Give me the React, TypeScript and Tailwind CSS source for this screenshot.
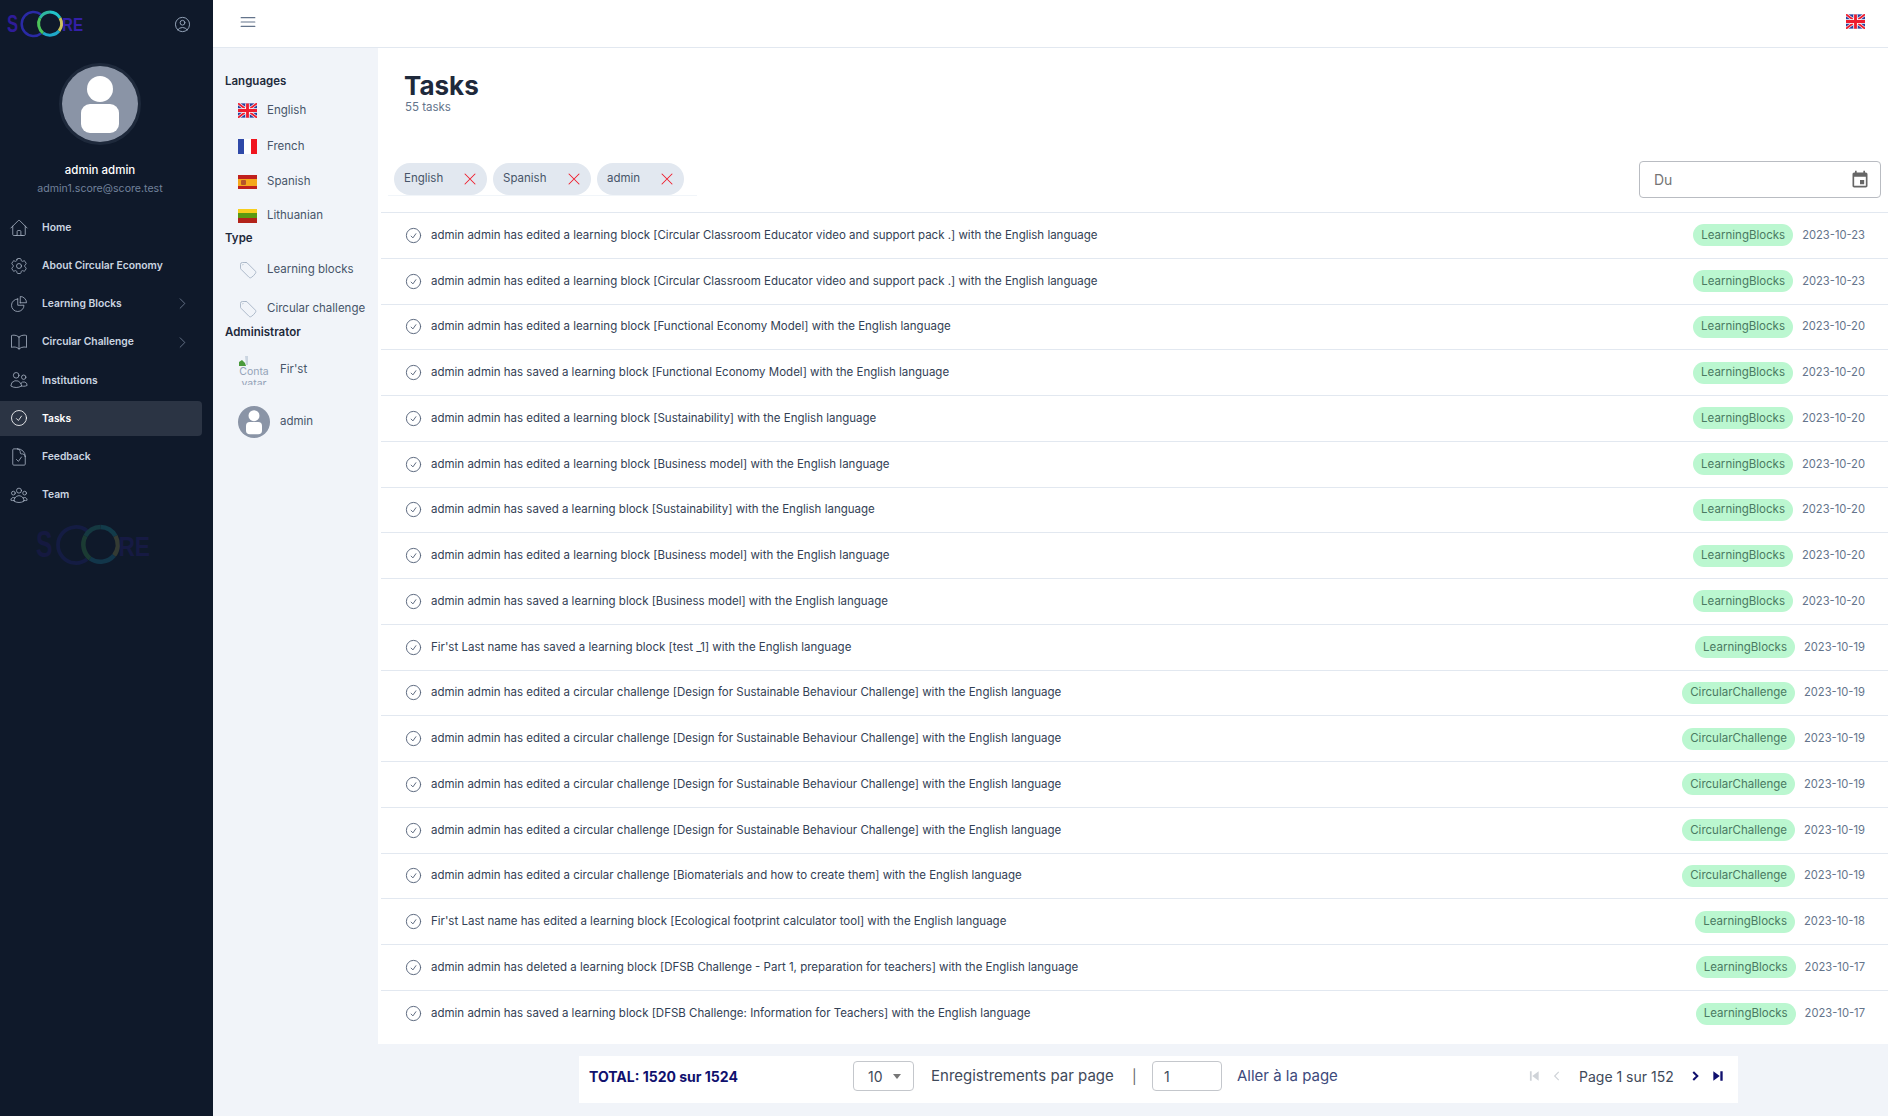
import {
  HiOutlineHome,
  HiOutlineCog6Tooth,
  HiOutlineChartPie,
  HiOutlineBookOpen,
  HiOutlineUsers,
  HiOutlineCheckCircle,
  HiOutlineDocumentCheck,
  HiOutlineUserGroup,
  HiOutlineTag,
  HiOutlineUserCircle,
  HiOutlineBars3,
  HiOutlineChevronRight,
  HiOutlineXMark,
} from "react-icons/hi2";

const menu = [
  { label: "Home", icon: HiOutlineHome },
  { label: "About Circular Economy", icon: HiOutlineCog6Tooth },
  { label: "Learning Blocks", icon: HiOutlineChartPie, arrow: true },
  { label: "Circular Challenge", icon: HiOutlineBookOpen, arrow: true },
  { label: "Institutions", icon: HiOutlineUsers },
  { label: "Tasks", icon: HiOutlineCheckCircle, active: true },
  { label: "Feedback", icon: HiOutlineDocumentCheck },
  { label: "Team", icon: HiOutlineUserGroup },
];

const lb = "LearningBlocks";
const cc = "CircularChallenge";
const classroom = "[Circular Classroom Educator video and support pack .]";
const design = "[Design for Sustainable Behaviour Challenge]";

const tasks = [
  { text: `admin admin has edited a learning block ${classroom} with the English language`, tag: lb, date: "2023-10-23" },
  { text: `admin admin has edited a learning block ${classroom} with the English language`, tag: lb, date: "2023-10-23" },
  { text: "admin admin has edited a learning block [Functional Economy Model] with the English language", tag: lb, date: "2023-10-20" },
  { text: "admin admin has saved a learning block [Functional Economy Model] with the English language", tag: lb, date: "2023-10-20" },
  { text: "admin admin has edited a learning block [Sustainability] with the English language", tag: lb, date: "2023-10-20" },
  { text: "admin admin has edited a learning block [Business model] with the English language", tag: lb, date: "2023-10-20" },
  { text: "admin admin has saved a learning block [Sustainability] with the English language", tag: lb, date: "2023-10-20" },
  { text: "admin admin has edited a learning block [Business model] with the English language", tag: lb, date: "2023-10-20" },
  { text: "admin admin has saved a learning block [Business model] with the English language", tag: lb, date: "2023-10-20" },
  { text: "Fir'st Last name has saved a learning block [test _1] with the English language", tag: lb, date: "2023-10-19" },
  { text: `admin admin has edited a circular challenge ${design} with the English language`, tag: cc, date: "2023-10-19" },
  { text: `admin admin has edited a circular challenge ${design} with the English language`, tag: cc, date: "2023-10-19" },
  { text: `admin admin has edited a circular challenge ${design} with the English language`, tag: cc, date: "2023-10-19" },
  { text: `admin admin has edited a circular challenge ${design} with the English language`, tag: cc, date: "2023-10-19" },
  { text: "admin admin has edited a circular challenge [Biomaterials and how to create them] with the English language", tag: cc, date: "2023-10-19" },
  { text: "Fir'st Last name has edited a learning block [Ecological footprint calculator tool] with the English language", tag: lb, date: "2023-10-18" },
  { text: "admin admin has deleted a learning block [DFSB Challenge - Part 1, preparation for teachers] with the English language", tag: lb, date: "2023-10-17" },
  { text: "admin admin has saved a learning block [DFSB Challenge: Information for Teachers] with the English language", tag: lb, date: "2023-10-17" },
];

function Logo({ className }: { className: string }) {
  return (
    <svg viewBox="0 0 78 28" className={`overflow-visible ${className}`}>
      <text x="0" y="22" fontFamily="Liberation Sans, sans-serif" fontWeight="700" fontSize="24" fill="#2e1c98" textLength="11" lengthAdjust="spacingAndGlyphs">S</text>
      <path d="M34 4.5a12 12 0 1 0 0 19" fill="none" stroke="#2a2aa6" strokeWidth="2.5" />
      <path d="M43 2a12 12 0 0 1 10 6" fill="none" stroke="#22c3c9" strokeWidth="3" />
      <path d="M53 8a12 12 0 0 1-1 13" fill="none" stroke="#c9c25a" strokeWidth="3" />
      <path d="M52 21a12 12 0 0 1-16 2" fill="none" stroke="#1fa8c9" strokeWidth="3" />
      <path d="M36 23a12 12 0 0 1-3-15" fill="none" stroke="#4cc35a" strokeWidth="3" />
      <path d="M33 8a12 12 0 0 1 10-6" fill="none" stroke="#2fb7a0" strokeWidth="3" />
      <text x="55" y="21" fontFamily="Liberation Sans, sans-serif" fontWeight="700" fontSize="19" fill="#3320a8" textLength="21" lengthAdjust="spacingAndGlyphs">RE</text>
    </svg>
  );
}

function Person({ head, body, bg, size }: { head: string; body: string; bg: string; size: string }) {
  return (
    <svg viewBox="0 0 76 76" className={size}>
      <circle cx="38" cy="38" r="38" fill={bg} />
      <circle cx="38" cy="23" r={head} fill="#fff" />
      <rect x="19" y="38" width="38" height="29" rx={body} fill="#fff" />
    </svg>
  );
}

function FlagUK({ className }: { className: string }) {
  return (
    <svg viewBox="0 0 60 45" className={className}>
      <rect width="60" height="45" fill="#2a3f9d" />
      <path d="M0 0L60 45M60 0L0 45" stroke="#fff" strokeWidth="10" />
      <path d="M0 0L60 45M60 0L0 45" stroke="#ee1c2e" strokeWidth="6" />
      <path d="M30 0v45M0 22.5h60" stroke="#fff" strokeWidth="14" />
      <path d="M30 0v45M0 22.5h60" stroke="#ee1c2e" strokeWidth="9" />
    </svg>
  );
}

function FlagFR() {
  return (
    <div className="flex h-[15px] w-[19px]">
      <div className="flex-1 bg-[#2f49a8]" />
      <div className="flex-1 bg-white" />
      <div className="flex-1 bg-[#f0141e]" />
    </div>
  );
}

function FlagES() {
  return (
    <div className="flex h-[14px] w-[19px] flex-col">
      <div className="h-[3.5px] bg-[#c0201e]" />
      <div className="flex flex-1 items-center bg-[#f5a81c] pl-[3px]">
        <div className="h-[5px] w-[5px] rounded-[1px] bg-[#b5532a]" />
      </div>
      <div className="h-[3.5px] bg-[#c0201e]" />
    </div>
  );
}

function FlagLT() {
  return (
    <div className="flex h-[14px] w-[19px] flex-col">
      <div className="flex-1 bg-[#f7ce1e]" />
      <div className="flex-1 bg-[#5b9a12]" />
      <div className="flex-1 bg-[#b3231a]" />
    </div>
  );
}

function Chip({ label, width }: { label: string; width: string }) {
  return (
    <div className={`flex h-[32px] items-center justify-between rounded-full bg-[#e2e8f0] pl-[10px] pr-[7px] text-[11.5px] text-[#475569] ${width}`}>
      <span>{label}</span>
      <HiOutlineXMark className="h-[20px] w-[20px] text-[#ef1c2c]" strokeWidth={1.25} />
    </div>
  );
}

function FilterHead({ label, height }: { label: string; height: string }) {
  return <div className={`flex items-center pl-[12px] text-[11.5px] font-semibold text-[#1e293b] ${height}`}>{label}</div>;
}

function FilterRow({ label, height, children }: { label: string; height: string; children: React.ReactNode }) {
  return (
    <div className={`flex items-center pl-[25px] text-[11.5px] text-[#475569] ${height}`}>
      <div className="flex w-[29px] shrink-0 items-center">{children}</div>
      <span className="whitespace-nowrap">{label}</span>
    </div>
  );
}

export default function App() {
  return (
    <div className="flex h-[1116px] w-[1888px] overflow-hidden bg-[#f1f4f9] font-['Inter',sans-serif]">
      <aside className="flex w-[213px] shrink-0 flex-col bg-[#0f192a]">
        <div className="flex h-[48px] items-center justify-between pl-[7px] pr-[21px]">
          <Logo className="h-[28px] w-[78px]" />
          <HiOutlineUserCircle className="h-[19px] w-[19px] text-[#94a3b8]" strokeWidth={1.25} />
        </div>
        <div className="w-[200px]">
          <div className="mt-[15px] flex justify-center">
            <div className="rounded-full border-[3px] border-[#1e293b]">
              <Person head="13" body="9" bg="#8a94a6" size="h-[76px] w-[76px]" />
            </div>
          </div>
          <div className="mt-[16px] text-center text-[11.5px] font-medium leading-[18px] text-white">admin admin</div>
          <div className="mt-[1px] text-center text-[10.6px] leading-[18px] text-[#71819a]">admin1.score@score.test</div>
        </div>
        <nav className="mt-[12px] flex flex-col">
          {menu.map((m) => (
            <div
              key={m.label}
              className={`mb-[3.2px] flex h-[35px] w-[202px] items-center rounded-r-[4px] pl-[9px] pr-[12px] text-[10.3px] font-semibold ${m.active ? "bg-[#2b3444] text-white" : "text-[#cbd5e1]"}`}
            >
              <m.icon className={`mr-[13px] h-[20px] w-[20px] shrink-0 ${m.active ? "text-white" : "text-[#a3aebf]"}`} strokeWidth={1} />
              <span className="flex-1 whitespace-nowrap">{m.label}</span>
              {m.arrow && <HiOutlineChevronRight className="h-[15px] w-[15px] text-[#78879c]" strokeWidth={1.25} />}
            </div>
          ))}
        </nav>
        <div className="mt-[8px] pl-[36px] opacity-20">
          <Logo className="h-[42px] w-[117px]" />
        </div>
      </aside>

      <div className="flex min-w-0 flex-1 flex-col">
        <header className="flex h-[48px] shrink-0 items-center justify-between border-b border-[#e2e8f0] bg-white pb-[4px] pl-[25px] pr-[23px]">
          <HiOutlineBars3 className="h-[20px] w-[20px] text-[#64748b]" strokeWidth={1.25} />
          <FlagUK className="h-[15px] w-[19px]" />
        </header>

        <div className="flex min-h-0 flex-1">
          <div className="w-[165px] shrink-0 pt-[24px]">
            <FilterHead label="Languages" height="h-[20px]" />
            <FilterRow label="English" height="h-[37px]"><FlagUK className="h-[15px] w-[19px]" /></FilterRow>
            <FilterRow label="French" height="h-[35.5px]"><FlagFR /></FilterRow>
            <FilterRow label="Spanish" height="h-[35px]"><FlagES /></FilterRow>
            <FilterRow label="Lithuanian" height="h-[32.5px]"><FlagLT /></FilterRow>
            <FilterHead label="Type" height="h-[14px]" />
            <FilterRow label="Learning blocks" height="h-[48px]"><HiOutlineTag className="h-[20px] w-[20px] text-[#a0aec0]" strokeWidth={1} /></FilterRow>
            <FilterRow label="Circular challenge" height="h-[30px]"><HiOutlineTag className="h-[20px] w-[20px] text-[#a0aec0]" strokeWidth={1} /></FilterRow>
            <FilterHead label="Administrator" height="h-[18px]" />
            <div className="flex h-[56px] items-center pl-[25px] text-[11.5px] text-[#475569]">
              <div className="mr-[10px] h-[30px] w-[32px] overflow-hidden text-[10.5px] leading-[12px] text-[#94a3b8]">
                <svg viewBox="0 0 12 12" className="h-[12px] w-[12px]">
                  <path d="M1 11V7l3-2 3 3 1 3z" fill="#4a9a3c" />
                  <path d="M7 1h3v9H8z" fill="#cbd5e1" />
                </svg>
                <div className="-mt-[1px] text-center">Conta</div>
                <div className="text-center">vatar</div>
              </div>
              <span>Fir'st</span>
            </div>
            <div className="flex h-[48px] items-center pl-[25px] text-[11.5px] text-[#475569]">
              <Person head="13" body="9" bg="#8a94a6" size="mr-[10px] h-[32px] w-[32px]" />
              <span>admin</span>
            </div>
          </div>

          <div className="flex min-w-0 flex-1 flex-col">
            <main className="h-[996px] shrink-0 bg-white pl-[3px]">
              <div className="h-[115px] pl-[23px] pt-[23px]">
                <h1 className="text-[26px] font-bold leading-[30px] text-[#1e293b]">Tasks</h1>
                <p className="-mt-[1px] pl-[1px] text-[11.5px] leading-[14px] text-[#64748b]">55 tasks</p>
              </div>
              <div className="flex h-[49px] items-start justify-between pr-[7px]">
                <div className="flex h-[33px] w-[309px] translate-x-[7px] gap-[6px] border-b border-[#f1f5f9] pl-[6px]">
                  <Chip label="English" width="w-[93px]" />
                  <Chip label="Spanish" width="w-[98px]" />
                  <Chip label="admin" width="w-[87px]" />
                </div>
                <div className="-mt-[2px] flex h-[37px] w-[242px] items-center justify-between rounded-[4px] border border-[#b9bcc2] pl-[14px] pr-[10px] text-[14px] text-[#757575]">
                  <span>Du</span>
                  <svg viewBox="0 0 24 24" className="h-[20px] w-[20px]" fill="#666">
                    <path d="M17 12h-5v5h5v-5zM16 1v2H8V1H6v2H5c-1.11 0-1.99.9-1.99 2L3 19c0 1.1.89 2 2 2h14c1.1 0 2-.9 2-2V5c0-1.1-.9-2-2-2h-1V1h-2zm3 18H5V8h14v11z" />
                  </svg>
                </div>
              </div>
              <div className="border-t border-[#e2e8f0]">
                {tasks.map((t, i) => (
                  <div key={i} className="flex h-[45.75px] items-center border-b border-[#e2e8f0] pl-[23px] pr-[23px] last:border-b-0">
                    <HiOutlineCheckCircle className="mr-[8px] h-[19px] w-[19px] shrink-0 text-[#56647a]" strokeWidth={1.2} />
                    <span className="flex-1 whitespace-nowrap text-[11.5px] text-[#334155]">{t.text}</span>
                    <span className="mr-[9px] flex h-[22px] items-center rounded-full bg-[#bbf7d0] px-[8px] text-[11.5px] text-[#4a7a62]">{t.tag}</span>
                    <span className="text-[11.2px] text-[#64748b]">{t.date}</span>
                  </div>
                ))}
              </div>
            </main>

            <div className="pl-[201px] pt-[12px]">
              <div className="flex h-[47px] w-[1159px] items-center bg-white pb-[7px] pl-[10px] pr-[13px] text-[14px] text-[#3f4a5a]">
                <span className="w-[264px] font-bold text-[#10106e]">TOTAL: 1520 sur 1524</span>
                <div className="flex h-[30px] w-[61px] items-center justify-between rounded-[4px] border border-[#c4c7cc] pl-[14px] pr-[12px]">
                  <span>10</span>
                  <span className="h-0 w-0 border-x-[4px] border-t-[5px] border-x-transparent border-t-[#777]" />
                </div>
                <span className="ml-[17px] w-[201px] text-[15px]">Enregistrements par page</span>
                <span className="w-[20px] text-[#666]">|</span>
                <div className="flex h-[30px] w-[70px] items-center rounded-[4px] border border-[#c4c7cc] pl-[11px]">1</div>
                <span className="ml-[15px] flex-1 text-[15px] text-[#3d4a7c]">Aller à la page</span>
                <svg viewBox="0 0 24 24" className="h-[14px] w-[14px]" fill="#cfd3d8">
                  <path d="M5 4h3v16H5zM20 4v16L9 12z" />
                </svg>
                <svg viewBox="0 0 24 24" className="ml-[9px] h-[14px] w-[14px]" fill="none" stroke="#cfd3d8" strokeWidth="2">
                  <path d="M15 5l-7 7 7 7" />
                </svg>
                <span className="ml-[15px] w-[108px] whitespace-nowrap">Page 1 sur 152</span>
                <svg viewBox="0 0 24 24" className="ml-[1px] h-[14px] w-[14px]" fill="none" stroke="#10106e" strokeWidth="3.5">
                  <path d="M9 5l7 7-7 7" />
                </svg>
                <svg viewBox="0 0 24 24" className="ml-[9px] h-[14px] w-[14px]" fill="#10106e">
                  <path d="M4 4v16l11-8zM16 4h4v16h-4z" />
                </svg>
              </div>
            </div>
          </div>
        </div>
      </div>
    </div>
  );
}
